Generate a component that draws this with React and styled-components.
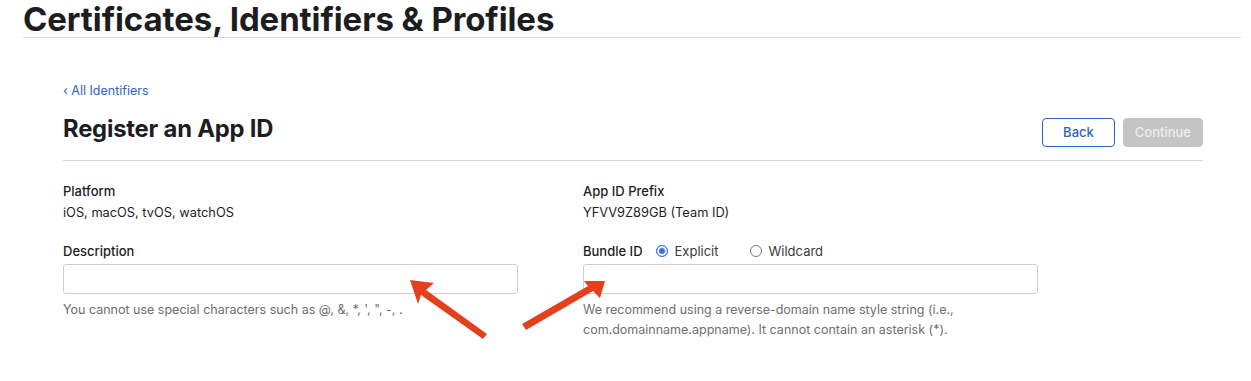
import styled, { createGlobalStyle } from 'styled-components';

const BLUE = '#2d64c0';
const TEXT = '#1d1d1f';
const GRAY = '#6e6e73';
const LINE = '#d8d8d8';
const ARROW = '#e5401d';

const GlobalStyle = createGlobalStyle`
  html, body {
    margin: 0;
    background: #fff;
  }
  body {
    font-family: Inter, 'Noto Sans', 'Liberation Sans', sans-serif;
    color: ${TEXT};
  }
`;

export default function App() {
  return (
    <Page>
      <GlobalStyle />
      <Header>
        <PageTitle>Certificates, Identifiers &amp; Profiles</PageTitle>
      </Header>

      <Content>
        <BackLink>‹ All Identifiers</BackLink>

        <TitleRow>
          <SectionTitle>Register an App ID</SectionTitle>
          <Buttons>
            <Button>Back</Button>
            <Button disabled primary>Continue</Button>
          </Buttons>
        </TitleRow>

        <Grid>
          <Field>
            <Label>Platform</Label>
            <Value>iOS, macOS, tvOS, watchOS</Value>
          </Field>
          <Field>
            <Label>App ID Prefix</Label>
            <Value>YFVV9Z89GB (Team ID)</Value>
          </Field>

          <Field>
            <LabelRow>
              <Label>Description</Label>
            </LabelRow>
            <Input />
            <Help>You cannot use special characters such as @, &amp;, *, ', ", -, .</Help>
          </Field>
          <Field>
            <LabelRow>
              <Label>Bundle ID</Label>
              <Radio>
                <Dot checked />
                Explicit
              </Radio>
              <Radio>
                <Dot />
                Wildcard
              </Radio>
            </LabelRow>
            <Input />
            <Help>
              We recommend using a reverse-domain name style string (i.e.,
              <br />
              com.domainname.appname). It cannot contain an asterisk (*).
            </Help>
          </Field>
        </Grid>
      </Content>

      <Arrows width="1251" height="381" viewBox="0 0 1251 381">
        <polygon
          fill={ARROW}
          points="410,280 434,283 426,290 487,334 483,339 421,295 418,304"
        />
        <polygon
          fill={ARROW}
          points="605,281 600,298 593,291 526,330 522,324 588,286 584,281"
        />
      </Arrows>
    </Page>
  );
}

const Page = styled.div`
  position: relative;
  width: 1251px;
  height: 381px;
  overflow: hidden;
`;

const Header = styled.header`
  margin: 0 10px 0 23px;
  height: 37px;
  border-bottom: 1px solid ${LINE};
`;

const PageTitle = styled.h1`
  margin: 0;
  font-size: 33px;
  line-height: 38px;
  font-weight: 700;
  letter-spacing: -0.1px;
`;

const Content = styled.main`
  padding: 45px 48px 0 63px;
`;

const BackLink = styled.a`
  display: block;
  font-size: 12.5px;
  line-height: 16px;
  color: ${BLUE};
  cursor: pointer;
`;

const TitleRow = styled.div`
  display: flex;
  align-items: center;
  justify-content: space-between;
  margin-top: 15px;
  padding-bottom: 10px;
  border-bottom: 1px solid ${LINE};
`;

const SectionTitle = styled.h2`
  margin: 0 0 6px;
  font-size: 23.8px;
  line-height: 30px;
  font-weight: 700;
  letter-spacing: -0.2px;
`;

const Buttons = styled.div`
  display: flex;
  gap: 8px;
`;

const Button = styled.button`
  height: 29px;
  padding: 0 ${(p) => (p.primary ? '11px' : '20px')};
  font-family: inherit;
  font-size: 13px;
  font-weight: 500;
  border-radius: 4px;
  border: 1px solid ${(p) => (p.primary ? '#c4c4c4' : BLUE)};
  background: ${(p) => (p.primary ? '#c4c4c4' : '#fff')};
  color: ${(p) => (p.primary ? '#eeeeee' : BLUE)};
`;

const Grid = styled.div`
  display: grid;
  grid-template-columns: 520px 455px;
  row-gap: 20px;
  padding-top: 21px;
`;

const Field = styled.div`
  display: flex;
  flex-direction: column;
`;

const LabelRow = styled.div`
  display: flex;
  align-items: center;
  height: 18px;
  gap: 7px;
`;

const Label = styled.div`
  font-size: 13px;
  line-height: 18px;
  font-weight: 500;
  color: ${TEXT};
  margin-right: 6px;
`;

const Value = styled.div`
  margin-top: 4px;
  font-size: 12.8px;
  line-height: 18px;
  color: ${TEXT};
`;

const Radio = styled.label`
  display: flex;
  align-items: center;
  gap: 7px;
  margin-right: 24px;
  font-size: 13px;
  color: #3a3a3c;
`;

const Dot = styled.span`
  box-sizing: border-box;
  width: 12px;
  height: 12px;
  border-radius: 50%;
  border: 1px solid ${(p) => (p.checked ? '#3a6ff0' : '#7a7a7a')};
  background: ${(p) => (p.checked ? '#3a6ff0' : '#fff')};
  box-shadow: ${(p) => (p.checked ? 'inset 0 0 0 2px #fff' : 'none')};
`;

const Input = styled.div`
  box-sizing: border-box;
  width: 455px;
  height: 30px;
  margin-top: 4px;
  border: 1px solid #cfcfd1;
  border-radius: 3px;
`;

const Help = styled.div`
  margin-top: 6px;
  font-size: 12.5px;
  line-height: 19.5px;
  color: ${GRAY};
`;

const Arrows = styled.svg`
  position: absolute;
  left: 0;
  top: 0;
  pointer-events: none;
`;
